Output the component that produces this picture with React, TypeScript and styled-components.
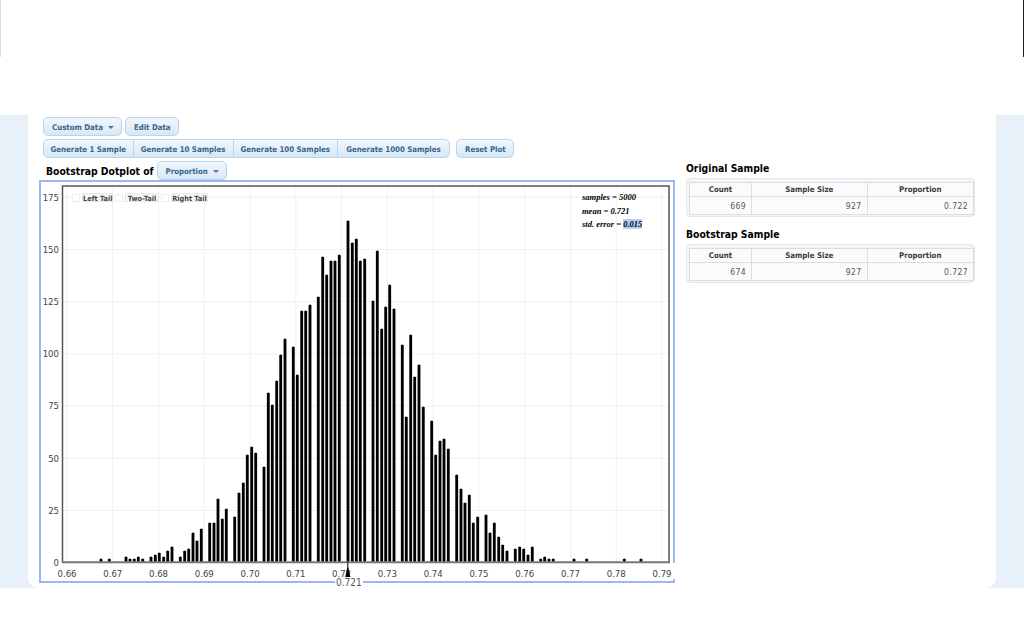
import React from "react";
import styled, { createGlobalStyle } from "styled-components";

const UI = `"DejaVu Sans Condensed", "DejaVu Sans", sans-serif`;

const Global = createGlobalStyle`
  html, body { margin: 0; padding: 0; background: #fff; }
  body { font-family: ${UI}; }
`;

const Page = styled.div`
  width: 1024px;
  height: 640px;
  overflow: hidden;
  display: flex;
  flex-direction: column;
`;
const TopStrip = styled.div`
  height: 57px;
  margin-bottom: 58px;
  box-sizing: border-box;
  border-left: 1px solid #ddd;
  border-right: 1px solid #222;
`;
const Band = styled.div`
  height: 473px;
  background: #e8f0fa;
  padding: 0 28px;
  box-sizing: border-box;
`;
const Card = styled.div`
  height: 100%;
  background: #fff;
  border-radius: 0 0 10px 10px;
  box-sizing: border-box;
  padding: 2px 21px 0 11px;
  display: flex;
  justify-content: space-between;
`;
const LeftColumn = styled.div`
  width: 636px;
  display: flex;
  flex-direction: column;
`;
const ButtonRow = styled.div`
  display: flex;
  margin: 0 0 3px 4px;
  gap: ${(p: { $gap?: number }) => p.$gap ?? 3}px;
`;
const Btn = styled.div`
  height: 19px;
  box-sizing: border-box;
  padding: 1px 7px 0 8px;
  display: flex;
  align-items: center;
  gap: 5px;
  border: 1px solid #b9d4ec;
  border-radius: 5px;
  background: linear-gradient(#f2f7fc, #d8e7f5);
  color: #35658f;
  font: 700 7.8px ${UI};
  white-space: nowrap;
`;
const Caret = styled.span`
  width: 0;
  height: 0;
  border-left: 3px solid transparent;
  border-right: 3px solid transparent;
  border-top: 3px solid #4a7aa8;
`;
const BtnGroup = styled.div`
  display: flex;
  height: 19px;
  box-sizing: border-box;
  border: 1px solid #b9d4ec;
  border-radius: 5px;
  background: linear-gradient(#f2f7fc, #d8e7f5);
  overflow: hidden;
`;
const GroupItem = styled.div`
  display: flex;
  align-items: center;
  justify-content: center;
  box-sizing: border-box;
  padding-top: 1px;
  width: ${(p: { $w: number }) => p.$w}px;
  border-right: 1px solid #b9d4ec;
  &:last-child { border-right: 0; }
  color: #35658f;
  font: 700 7.8px ${UI};
  white-space: nowrap;
`;
const TitleRow = styled.div`
  display: flex;
  align-items: center;
  margin-left: 7px;
  gap: 3px;
`;
const Title = styled.div`
  font: 700 10.3px ${UI};
  color: #000;
  white-space: nowrap;
`;
const Frame = styled.div`
  position: relative;
  width: 636px;
  height: 403px;
  box-sizing: border-box;
  border: 2px solid #9db6f0;
`;
const ChartSvg = styled.svg`
  display: block;
  width: 632px;
  height: 399px;
`;
const BorderGap = styled.div`
  position: absolute;
  right: -2px;
  top: 381px;
  width: 3px;
  height: 16px;
  background: #fff;
`;
const MarkerLabel = styled.div`
  position: absolute;
  left: 294px;
  bottom: -7px;
  padding: 0 1px;
  background: #fff;
  font: 400 10px ${UI};
  color: #555;
  line-height: 10px;
`;
const Legend = styled.div`
  position: absolute;
  left: 31px;
  top: 11px;
  display: flex;
  align-items: center;
`;
const TailBox = styled.span`
  box-sizing: border-box;
  width: 8px;
  height: 8px;
  margin-right: 2px;
  border: 1px solid #eee;
  background: #fff;
`;
const TailLabel = styled.span`
  box-sizing: border-box;
  width: ${(p: { $w: number }) => p.$w}px;
  height: 9px;
  line-height: 7px;
  margin-right: 2px;
  border: 1px solid #e8e8e8;
  background: #f7f7f7;
  font: 700 7.3px ${UI};
  color: #444;
  text-align: center;
  white-space: nowrap;
`;
const Stats = styled.div`
  position: absolute;
  left: 541px;
  top: 10px;
  display: flex;
  flex-direction: column;
  gap: 3.5px;
  font: italic 700 8.5px/10px "Liberation Serif", serif;
  color: #000;
  white-space: nowrap;
`;
const Selected = styled.span`
  background: #b5d0f5;
`;
const RightColumn = styled.div`
  width: 289px;
  padding-top: 44px;
`;
const SectionTitle = styled.div`
  font: 700 10.3px/14px ${UI};
  color: #000;
  margin-bottom: 3px;
  white-space: nowrap;
`;
const TableWrap = styled.div`
  box-sizing: border-box;
  height: 39px;
  padding: 3px 4px 3px 2px;
  margin-bottom: 10px;
  background: #f3f4f6;
  border: 1px solid #e6e6e6;
  border-radius: 4px;
`;
const Table = styled.table`
  width: 100%;
  border-collapse: collapse;
  table-layout: fixed;
  background: #fafbfc;
`;
const Th = styled.th`
  height: 13px;
  padding: 0;
  border: 1px solid #ddd;
  font: 700 7.8px ${UI};
  color: #3a3a3a;
  width: ${(p: { $w: number }) => p.$w}px;
`;
const Td = styled.td`
  height: 17px;
  padding: 0 5px;
  border: 1px solid #ddd;
  text-align: right;
  font: 400 8.5px ${UI};
  color: #555;
  letter-spacing: 0.4px;
`;

const bars: [number, number][] = [
  [101,559],[109.3,559],[126,557],[130,559],[134.3,559],[138.3,557],[142.7,559],[151,557],[155.3,555],[159.3,552.7],[163.7,557],[167.7,550.7],[172,546.7],
  [180.3,557],[184.7,550.7],[188.7,548.7],[193,532.3],[197,540.3],[201.3,527.7],[209.7,521.7],[214,521.7],[218,498.3],[222.3,517.7],[226.3,509],
  [234.7,515.3],[239,492.7],[243.3,482],[247.3,455],[251.7,446.7],[255.7,453],[264,465.3],[268.3,392.3],[272.3,405],[276.7,380],[280.7,355],[285,338.3],
  [293.3,346.7],[297.3,373.7],[301.7,311],[305.7,311],[310,304.7],[318.3,296.7],[322.7,257],[326.7,273.7],[331,261],[335,259.3],[339.3,254.7],
  [348,219.3],[352.3,242.3],[356.3,238.3],[360.3,261],[364.7,259],[373,300.7],[377.3,250.7],[381.7,327.7],[385.7,307],[389.7,284],[394,309],
  [402.3,344.3],[406.3,415.3],[410.7,334],[414.7,375.7],[419,363.3],[423.3,407],[431.7,419.7],[435.7,455],[440,440.3],[444,438.3],[448.3,448.7],
  [456.7,473.7],[461,488.3],[465,503],[469.3,494.7],[473.3,521.7],[477.7,515.7],[486,513.3],[490,532.3],[494.3,521.7],[498.7,536.7],[502.7,545],[507,551],
  [515.3,549],[519.7,547],[523.7,549],[528,555],[532.3,547],[540.7,559],[544.7,555.3],[549,559],[553.3,559],[574,559],[586.7,559],[624.3,559],[641,559],
];
const xTicks = ["0.66","0.67","0.68","0.69","0.70","0.71","0.72","0.73","0.74","0.75","0.76","0.77","0.78","0.79"];
const yTicks = [175,150,125,100,75,50,25,0];
const xAt = (i: number) => 67 + i * 45.77;
const yAt = (i: number) => 197.3 + i * 52.2;

const Chart = () => (
  <ChartSvg viewBox="41 182 632 399">
    {xTicks.map((_, i) => (
      <line key={i} x1={xAt(i)} x2={xAt(i)} y1={186} y2={562} stroke="#f1f1f1" />
    ))}
    {yTicks.map((_, i) => (
      <line key={i} x1={62} x2={669} y1={yAt(i)} y2={yAt(i)} stroke="#f1f1f1" />
    ))}
    <path d="M62.5 562.5V186H669V562.5" fill="none" stroke="#555" strokeWidth={1.5} />
    <line x1={62} x2={670} y1={562.3} y2={562.3} stroke="#777" strokeWidth={2} />
    {bars.map(([x, top]) => (
      <line key={x} x1={x} x2={x} y1={560} y2={Math.min(top + 0.7, 559.9)} stroke="#000" strokeWidth={3.2} strokeLinecap="round" strokeDasharray="0 2" />
    ))}
    {yTicks.map((t, i) => (
      <text key={t} x={59} y={yAt(i) + 3.3} textAnchor="end" fontSize={9.5} fill="#444" fontFamily={UI}>{t}</text>
    ))}
    {xTicks.map((t, i) => (
      <text key={t} x={xAt(i)} y={576.5} textAnchor="middle" fontSize={9.5} fill="#444" fontFamily={UI}>{t}</text>
    ))}
    <path d="M347.3 562h1v5l2 10h-5l2-10z" fill="#000" />
  </ChartSvg>
);

const Summary = ({ title, count, size, prop }: { title: string; count: string; size: string; prop: string }) => (
  <>
    <SectionTitle>{title}</SectionTitle>
    <TableWrap>
      <Table>
        <thead>
          <tr>
            <Th $w={61}>Count</Th>
            <Th $w={114.5}>Sample Size</Th>
            <Th $w={105.5}>Proportion</Th>
          </tr>
        </thead>
        <tbody>
          <tr>
            <Td>{count}</Td>
            <Td>{size}</Td>
            <Td>{prop}</Td>
          </tr>
        </tbody>
      </Table>
    </TableWrap>
  </>
);

export default function App() {
  return (
    <Page>
      <Global />
      <TopStrip />
      <Band>
        <Card>
          <LeftColumn>
            <ButtonRow>
              <Btn>Custom Data <Caret /></Btn>
              <Btn>Edit Data</Btn>
            </ButtonRow>
            <ButtonRow $gap={6}>
              <BtnGroup>
                <GroupItem $w={89.5}>Generate 1 Sample</GroupItem>
                <GroupItem $w={100}>Generate 10 Samples</GroupItem>
                <GroupItem $w={104.5}>Generate 100 Samples</GroupItem>
                <GroupItem $w={111}>Generate 1000 Samples</GroupItem>
              </BtnGroup>
              <Btn>Reset Plot</Btn>
            </ButtonRow>
            <TitleRow>
              <Title>Bootstrap Dotplot of</Title>
              <Btn>Proportion <Caret /></Btn>
            </TitleRow>
            <Frame>
              <Chart />
              <Legend>
                <TailBox /><TailLabel $w={31}>Left Tail</TailLabel>
                <TailBox /><TailLabel $w={34}>Two-Tail</TailLabel>
                <TailBox /><TailLabel $w={37}>Right Tail</TailLabel>
              </Legend>
              <Stats>
                <span>samples = 5000</span>
                <span>mean = 0.721</span>
                <span>std. error = <Selected>0.015</Selected></span>
              </Stats>
              <BorderGap />
              <MarkerLabel>0.721</MarkerLabel>
            </Frame>
          </LeftColumn>
          <RightColumn>
            <Summary title="Original Sample" count="669" size="927" prop="0.722" />
            <Summary title="Bootstrap Sample" count="674" size="927" prop="0.727" />
          </RightColumn>
        </Card>
      </Band>
    </Page>
  );
}
